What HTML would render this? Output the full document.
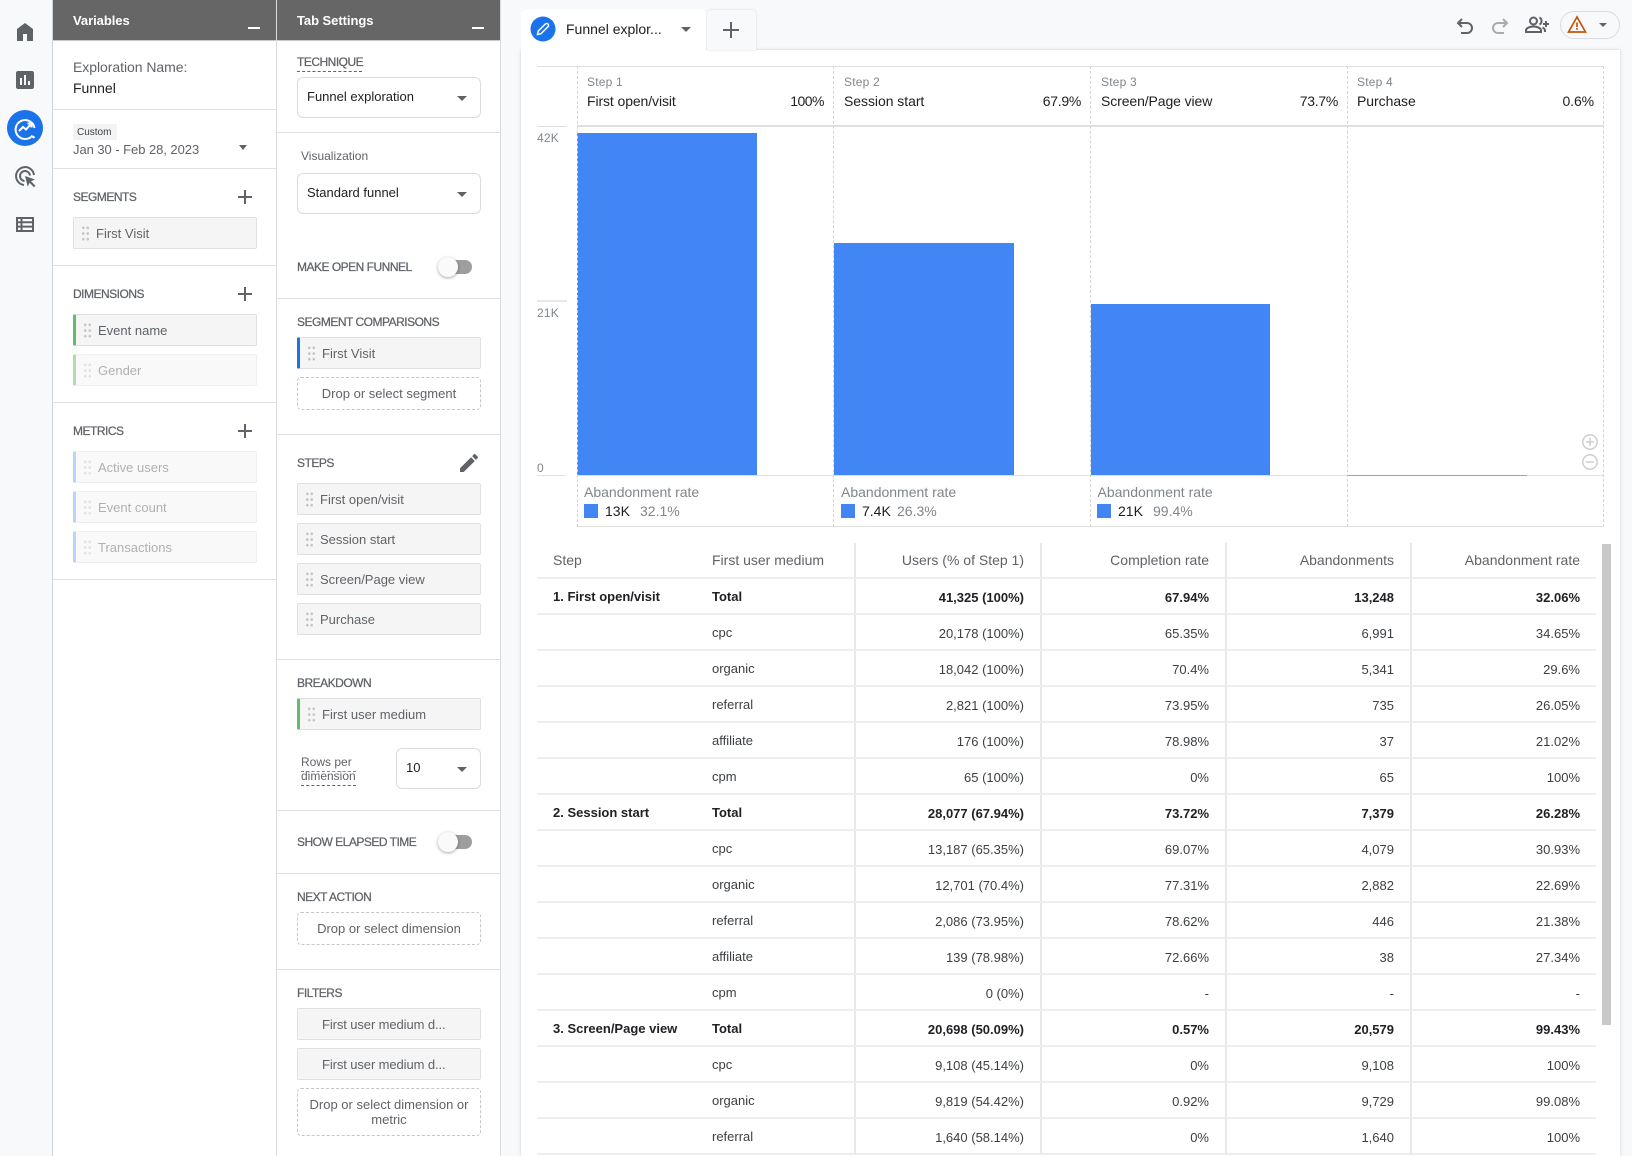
<!DOCTYPE html>
<html lang="en"><head><meta charset="utf-8"><title>Funnel exploration</title>
<style>
*{box-sizing:border-box}
html,body{margin:0;padding:0}
body{width:1632px;height:1156px;position:relative;overflow:hidden;background:#f8f9fa;font-family:"Liberation Sans",Arial,sans-serif;color:#5f6368;font-size:13px}
.a{position:absolute}
.t{position:absolute;white-space:nowrap;line-height:20px;height:20px}
.panel{position:absolute;top:0;height:1156px;background:#fff;border-right:1px solid #dadce0}
.hd{position:absolute;top:0;height:41px;background:#666;border-bottom:1px solid #c9c9c9;color:#fff;font-weight:700;font-size:13px;line-height:41px;padding-left:20px;letter-spacing:-.05px}
.hd i{position:absolute;left:195px;top:27px;width:12px;height:2px;background:#fff}
.div{position:absolute;height:1px;background:#e0e0e0}
.h{position:absolute;white-space:nowrap;line-height:20px;height:20px;font-size:12px;letter-spacing:-.5px;color:#5f6368;-webkit-text-stroke:.25px #5f6368}
.plus{position:absolute;width:14px;height:14px;background:linear-gradient(#5f6368,#5f6368) 0 6px/14px 2px no-repeat,linear-gradient(#5f6368,#5f6368) 6px 0/2px 14px no-repeat}
.chip{position:absolute;width:184px;height:32px;background:#f5f5f5;border:1px solid #e0e0e0;border-radius:2px;line-height:31px;white-space:nowrap}
.chip.bar{border-left-width:3px}
.chip.f{opacity:.5}
.chip b{font-weight:400;position:absolute;top:0;left:22px}
.chip.bar b{left:22px}
.d{position:absolute;left:7px;top:7px;width:9px;height:17px;background:radial-gradient(circle,#c2c2c2 1.1px,transparent 1.5px) 0 0/4.5px 5.7px}
.chip.bar .d{left:7px}
.sel{position:absolute;background:#fff;border:1px solid #dadce0;border-radius:6px;color:#202124;line-height:37px;padding-left:9px;height:41px}
.car{position:absolute;width:0;height:0;border-left:5px solid transparent;border-right:5px solid transparent;border-top:5px solid #5f6368}
.dash{position:absolute;left:297px;width:184px;border:1px dashed #c4c7c5;border-radius:4px;text-align:center;background:#fff}
.tg{position:absolute;width:27px;height:14px;background:#9e9e9e;border-radius:7px}
.tg i{position:absolute;left:-7px;top:-3px;width:20px;height:20px;border-radius:50%;background:#fafafa;box-shadow:0 1px 3px rgba(0,0,0,.35)}
.cl{position:absolute;top:66px;height:461px;width:0;border-left:1.5px dashed #d4d4d4}
.s{font-size:12px;color:#80868b;letter-spacing:.2px}
.n{font-size:14px;color:#202124}
.ab{font-size:14px;color:#80868b}
.sw{position:absolute;width:14px;height:14px;background:#4285f4}
table{position:absolute;left:537px;top:543px;border-collapse:separate;border-spacing:0;table-layout:fixed;width:1059px;font-size:13px;color:#3c4043}
th,td{height:36px;padding:0 16px 0 0;border-bottom:2px solid #eeeeee;white-space:nowrap;overflow:hidden;font-weight:400;box-sizing:border-box}
th{font-size:14px;color:#5f6368;text-align:right;height:36px;padding-bottom:1px}
td{text-align:right;padding-top:2px}
.l{text-align:left;padding-top:0;padding-bottom:0}
th.l{padding-bottom:1px}
.f1{padding-left:16px}
.v{border-right:2px solid #e8e8e8}
tr.b td{font-weight:700;color:#202124}
</style></head><body>

<!-- rail -->
<div class="a" style="left:52px;top:0;width:1px;height:1156px;background:#d0d3d6"></div>
<svg class="a" style="left:13px;top:20px" width="24" height="24" viewBox="0 0 24 24"><path fill="#5f6368" d="M4 21V9l8-6 8 6v12h-6v-7h-4v7z"/></svg>
<svg class="a" style="left:13px;top:68px" width="24" height="24" viewBox="0 0 24 24"><path fill="#5f6368" d="M19 3H5c-1.100 0-2 .9-2 2v14c0 1.100.9 2 2 2h14c1.100 0 2-.9 2-2V5c0-1.100-.9-2-2-2zM9 17H7v-7h2v7zm4 0h-2V7h2v10zm4 0h-2v-4h2v4z"/></svg>
<svg class="a" style="left:7px;top:110px" width="36" height="36" viewBox="0 0 36 36"><circle cx="18" cy="18" r="18" fill="#1a73e8"/><path fill="none" stroke="#fff" stroke-width="2" d="M25.500 25.500A9.500 9.500 0 1 1 27.500 18"/><path fill="none" stroke="#fff" stroke-width="2" d="M12 21l4-4 3 2.500 5-5.500M20.500 13.500h4v4"/><circle cx="26.500" cy="27" r="1.300" fill="#fff"/></svg>
<svg class="a" style="left:13px;top:164px" width="24" height="24" viewBox="0 0 24 24"><path fill="none" stroke="#5f6368" stroke-width="2" d="M11 21A9 9 0 1 1 21 11M11.500 17A5 5 0 1 1 17 11.500"/><path fill="#5f6368" d="M12 12l10 3.500-4 1.700 4.500 4.500-1.500 1.500-4.500-4.500-1.700 4z"/></svg>
<svg class="a" style="left:13px;top:212px" width="24" height="24" viewBox="0 0 24 24"><path fill="none" stroke="#5f6368" stroke-width="2" d="M4 6h16v13H4z"/><path stroke="#5f6368" stroke-width="2" d="M4 10.300h16M4 14.600h16M8.500 6v13"/></svg>

<!-- Variables panel -->
<div class="panel" style="left:53px;width:224px"></div>
<div class="hd" style="left:53px;width:223px">Variables<i></i></div>
<div class="t" style="left:73px;top:57px;font-size:14px;letter-spacing:-.05px">Exploration Name:</div>
<div class="t" style="left:73px;top:78px;font-size:14px;color:#202124">Funnel</div>
<div class="div" style="left:53px;top:109px;width:223px"></div>
<div class="a" style="left:73px;top:124px;width:44px;height:16px;background:#f1f3f4;border-radius:2px;font-size:10px;line-height:18px;padding-left:4px;color:#3c4043">Custom</div>
<div class="t" style="left:73px;top:140px;letter-spacing:-.05px">Jan 30 - Feb 28, 2023</div>
<div class="car" style="left:239px;top:145px;border-left-width:4.500px;border-right-width:4.500px"></div>
<div class="div" style="left:53px;top:168px;width:223px"></div>
<div class="h" style="left:73px;top:187px">SEGMENTS</div><div class="plus" style="left:238px;top:190px"></div>
<div class="chip" style="left:73px;top:217px"><span class="d"></span><b>First Visit</b></div>
<div class="div" style="left:53px;top:265px;width:223px"></div>
<div class="h" style="left:73px;top:284px">DIMENSIONS</div><div class="plus" style="left:238px;top:287px"></div>
<div class="chip bar" style="left:73px;top:314px;border-left-color:#66bb6a"><span class="d"></span><b>Event name</b></div>
<div class="chip bar f" style="left:73px;top:354px;border-left-color:#66bb6a"><span class="d"></span><b>Gender</b></div>
<div class="div" style="left:53px;top:402px;width:223px"></div>
<div class="h" style="left:73px;top:421px">METRICS</div><div class="plus" style="left:238px;top:424px"></div>
<div class="chip bar f" style="left:73px;top:451px;border-left-color:#7baaf7"><span class="d"></span><b>Active users</b></div>
<div class="chip bar f" style="left:73px;top:491px;border-left-color:#7baaf7"><span class="d"></span><b>Event count</b></div>
<div class="chip bar f" style="left:73px;top:531px;border-left-color:#7baaf7"><span class="d"></span><b>Transactions</b></div>
<div class="div" style="left:53px;top:579px;width:223px"></div>

<!-- Tab settings -->
<div class="panel" style="left:277px;width:224px"></div>
<div class="hd" style="left:277px;width:223px">Tab Settings<i></i></div>
<div class="h" style="left:297px;top:52px">TECHNIQUE</div>
<div class="a" style="left:297px;top:71px;width:65px;border-top:1px dashed #5f6368"></div>
<div class="sel" style="left:297px;top:77px;width:184px">Funnel exploration</div><div class="car" style="left:457px;top:96px"></div>
<div class="div" style="left:277px;top:132px;width:223px"></div>
<div class="t" style="left:301px;top:146px;font-size:12px">Visualization</div>
<div class="sel" style="left:297px;top:173px;width:184px">Standard funnel</div><div class="car" style="left:457px;top:192px"></div>
<div class="h" style="left:297px;top:257px">MAKE OPEN FUNNEL</div>
<div class="tg" style="left:445px;top:260px"><i></i></div>
<div class="div" style="left:277px;top:298px;width:223px"></div>
<div class="h" style="left:297px;top:312px">SEGMENT COMPARISONS</div>
<div class="chip bar" style="left:297px;top:337px;border-left-color:#1a73e8"><span class="d"></span><b>First Visit</b></div>
<div class="dash" style="top:377px;height:33px;line-height:31px">Drop or select segment</div>
<div class="div" style="left:277px;top:434px;width:223px"></div>
<div class="h" style="left:297px;top:453px">STEPS</div>
<svg class="a" style="left:457px;top:451px" width="24" height="24" viewBox="0 0 24 24"><path fill="#5f6368" d="M3 17.250V21h3.750L17.810 9.940l-3.750-3.750L3 17.250zM20.710 7.040a1 1 0 0 0 0-1.410l-2.340-2.340a1 1 0 0 0-1.410 0l-1.830 1.830 3.750 3.750 1.830-1.830z"/></svg>
<div class="chip" style="left:297px;top:483px"><span class="d"></span><b>First open/visit</b></div>
<div class="chip" style="left:297px;top:523px"><span class="d"></span><b>Session start</b></div>
<div class="chip" style="left:297px;top:563px"><span class="d"></span><b>Screen/Page view</b></div>
<div class="chip" style="left:297px;top:603px"><span class="d"></span><b>Purchase</b></div>
<div class="div" style="left:277px;top:659px;width:223px"></div>
<div class="h" style="left:297px;top:673px">BREAKDOWN</div>
<div class="chip bar" style="left:297px;top:698px;border-left-color:#66bb6a"><span class="d"></span><b>First user medium</b></div>
<div class="t" style="left:301px;top:752px;font-size:12px">Rows per</div>
<div class="a" style="left:301px;top:771px;width:55px;border-top:1px dashed #80868b"></div>
<div class="t" style="left:301px;top:766px;font-size:12px">dimension</div>
<div class="a" style="left:301px;top:785px;width:55px;border-top:1px dashed #5f6368"></div>
<div class="sel" style="left:396px;top:748px;width:85px">10</div><div class="car" style="left:457px;top:767px"></div>
<div class="div" style="left:277px;top:810px;width:223px"></div>
<div class="h" style="left:297px;top:832px">SHOW ELAPSED TIME</div>
<div class="tg" style="left:445px;top:835px"><i></i></div>
<div class="div" style="left:277px;top:873px;width:223px"></div>
<div class="h" style="left:297px;top:887px">NEXT ACTION</div>
<div class="dash" style="top:912px;height:33px;line-height:31px">Drop or select dimension</div>
<div class="div" style="left:277px;top:969px;width:223px"></div>
<div class="h" style="left:297px;top:983px">FILTERS</div>
<div class="chip" style="left:297px;top:1008px;padding-left:24px;letter-spacing:-.1px">First user medium d...</div>
<div class="chip" style="left:297px;top:1048px;padding-left:24px;letter-spacing:-.1px">First user medium d...</div>
<div class="dash" style="top:1088px;height:48px;line-height:15px;padding-top:8px">Drop or select dimension or metric</div>

<!-- top -->
<div class="a" style="left:521px;top:50px;width:1099px;height:1106px;background:#fff;box-shadow:0 0 3px rgba(60,64,67,.25)"></div>
<div class="a" style="left:707px;top:10px;width:49px;height:40px;background:#f8f9fa;border-radius:4px 4px 0 0;box-shadow:0 0 2px rgba(60,64,67,.18)"></div>
<div class="a" style="left:521px;top:9px;width:185px;height:43px;background:#fff;border-radius:6px 6px 0 0"></div>
<svg class="a" style="left:530px;top:16px" width="26" height="26" viewBox="0 0 26 26"><circle cx="13" cy="13" r="12.500" fill="#1a73e8"/><path fill="none" stroke="#fff" stroke-width="1.500" d="M7.500 18.500l.8-3.500 7-7a1.500 1.500 0 0 1 2.700 2.700l-7 7z"/></svg>
<div class="t" style="left:566px;top:19px;font-size:14px;color:#202124">Funnel explor...</div>
<div class="car" style="left:681px;top:27px"></div>
<div class="plus" style="left:723px;top:22px;width:16px;height:16px;background:linear-gradient(#5f6368,#5f6368) 0 7px/16px 2px no-repeat,linear-gradient(#5f6368,#5f6368) 7px 0/2px 16px no-repeat"></div>
<svg class="a" style="left:1453px;top:13px" width="24" height="24" viewBox="0 0 24 24"><path fill="none" stroke="#5f6368" stroke-width="2" d="M9 6L5 10l4 4M5 10h9a5 5 0 0 1 0 10H8"/></svg>
<svg class="a" style="left:1488px;top:13px" width="24" height="24" viewBox="0 0 24 24"><path fill="none" stroke="#a8abaf" stroke-width="2" d="M15 6l4 4-4 4M19 10h-9a5 5 0 0 0 0 10h6"/></svg>
<svg class="a" style="left:1524px;top:13px" width="26" height="24" viewBox="0 0 26 24"><circle cx="9.500" cy="8" r="3.500" fill="none" stroke="#5f6368" stroke-width="2"/><path fill="none" stroke="#5f6368" stroke-width="2" d="M2 19v-1.500c0-2.500 4-4 7.500-4s7.500 1.500 7.500 4V19zM15.500 4.500a4 4 0 0 1 0 7M18.500 14.500c1.500.7 2.500 1.700 2.500 3V19"/><path stroke="#5f6368" stroke-width="2" d="M19 11h6M22 8v6"/></svg>
<div class="a" style="left:1560px;top:11px;width:60px;height:28px;border:1px solid #dadce0;border-radius:14px"></div>
<svg class="a" style="left:1567px;top:15px" width="20" height="19" viewBox="0 0 20 19"><path fill="none" stroke="#c5530a" stroke-width="1.700" d="M10 2L1.500 17h17z"/><path stroke="#c5530a" stroke-width="1.700" d="M10 7.500v4.500M10 13v1.700"/></svg>
<div class="car" style="left:1599px;top:23px;border-left-width:4px;border-right-width:4px;border-top-width:4px"></div>

<!-- chart -->
<div class="a" style="left:537px;top:66px;width:1067px;height:1px;background:#e0e0e0"></div>
<div class="a" style="left:577px;top:125px;width:1027px;height:2px;background:#e0e0e0"></div>
<div class="a" style="left:537px;top:126px;width:30px;height:1px;background:#e0e0e0"></div>
<div class="t s" style="left:537px;top:128px">42K</div>
<div class="a" style="left:537px;top:300px;width:30px;height:2px;background:#e8e8e8"></div>
<div class="t s" style="left:537px;top:303px">21K</div>
<div class="t s" style="left:537px;top:458px">0</div>
<div class="a" style="left:537px;top:475px;width:28px;height:1px;background:#e0e0e0"></div>
<div class="a" style="left:577px;top:475px;width:1027px;height:1px;background:#e0e0e0"></div>
<div class="a" style="left:577px;top:526px;width:1027px;height:1px;background:#e0e0e0"></div>
<div class="a" style="left:577px;top:133px;width:180px;height:342px;background:#4285f4"></div>
<div class="a" style="left:834px;top:243px;width:180px;height:232px;background:#4285f4"></div>
<div class="a" style="left:1091px;top:304px;width:179px;height:171px;background:#4285f4"></div>
<div class="a" style="left:1347px;top:475px;width:180px;height:1px;background:#7da3e8"></div>
<div class="cl" style="left:576.500px"></div><div class="cl" style="left:833px"></div><div class="cl" style="left:1090px"></div><div class="cl" style="left:1347px"></div><div class="cl" style="left:1603px"></div>

<div class="t s" style="left:587px;top:72px">Step 1</div><div class="t n" style="left:587px;top:91px;letter-spacing:-.1px">First open/visit</div><div class="t n" style="right:808px;top:91px;letter-spacing:-.5px">100%</div>
<div class="t s" style="left:844px;top:72px">Step 2</div><div class="t n" style="left:844px;top:91px;letter-spacing:-.05px">Session start</div><div class="t n" style="right:551px;top:91px;letter-spacing:-.3px">67.9%</div>
<div class="t s" style="left:1101px;top:72px">Step 3</div><div class="t n" style="left:1101px;top:91px;letter-spacing:-.1px">Screen/Page view</div><div class="t n" style="right:294px;top:91px;letter-spacing:-.3px">73.7%</div>
<div class="t s" style="left:1357px;top:72px">Step 4</div><div class="t n" style="left:1357px;top:91px;letter-spacing:-.05px">Purchase</div><div class="t n" style="right:38px;top:91px;letter-spacing:-.1px">0.6%</div>

<div class="t ab" style="left:584px;top:482px">Abandonment rate</div><div class="sw" style="left:584px;top:504px"></div><div class="t n" style="left:605px;top:501px">13K</div><div class="t ab" style="left:640px;top:501px">32.1%</div>
<div class="t ab" style="left:841px;top:482px">Abandonment rate</div><div class="sw" style="left:841px;top:504px"></div><div class="t n" style="left:862px;top:501px">7.4K</div><div class="t ab" style="left:897px;top:501px">26.3%</div>
<div class="t ab" style="left:1097.500px;top:482px">Abandonment rate</div><div class="sw" style="left:1097px;top:504px"></div><div class="t n" style="left:1118px;top:501px">21K</div><div class="t ab" style="left:1153px;top:501px">99.4%</div>

<svg class="a" style="left:1581px;top:433px" width="18" height="38" viewBox="0 0 18 38"><g fill="none" stroke="#cfcfcf" stroke-width="1.500"><circle cx="9" cy="9" r="7.200"/><circle cx="9" cy="29" r="7.200"/><path d="M5 9h8M9 5v8M5 29h8"/></g></svg>

<!-- table -->
<table>
<colgroup><col style="width:175px"><col style="width:144px"><col style="width:186px"><col style="width:185px"><col style="width:185px"><col style="width:184px"></colgroup>
<tr><th class="l f1">Step</th><th class="l v">First user medium</th><th class="v">Users (% of Step 1)</th><th class="v">Completion rate</th><th class="v">Abandonments</th><th>Abandonment rate</th></tr>
<tr class="b"><td class="l f1">1. First open/visit</td><td class="l v">Total</td><td class="v">41,325 (100%)</td><td class="v">67.94%</td><td class="v">13,248</td><td>32.06%</td></tr>
<tr><td class="l f1"></td><td class="l v">cpc</td><td class="v">20,178 (100%)</td><td class="v">65.35%</td><td class="v">6,991</td><td>34.65%</td></tr>
<tr><td class="l f1"></td><td class="l v">organic</td><td class="v">18,042 (100%)</td><td class="v">70.4%</td><td class="v">5,341</td><td>29.6%</td></tr>
<tr><td class="l f1"></td><td class="l v">referral</td><td class="v">2,821 (100%)</td><td class="v">73.95%</td><td class="v">735</td><td>26.05%</td></tr>
<tr><td class="l f1"></td><td class="l v">affiliate</td><td class="v">176 (100%)</td><td class="v">78.98%</td><td class="v">37</td><td>21.02%</td></tr>
<tr><td class="l f1"></td><td class="l v">cpm</td><td class="v">65 (100%)</td><td class="v">0%</td><td class="v">65</td><td>100%</td></tr>
<tr class="b"><td class="l f1">2. Session start</td><td class="l v">Total</td><td class="v">28,077 (67.94%)</td><td class="v">73.72%</td><td class="v">7,379</td><td>26.28%</td></tr>
<tr><td class="l f1"></td><td class="l v">cpc</td><td class="v">13,187 (65.35%)</td><td class="v">69.07%</td><td class="v">4,079</td><td>30.93%</td></tr>
<tr><td class="l f1"></td><td class="l v">organic</td><td class="v">12,701 (70.4%)</td><td class="v">77.31%</td><td class="v">2,882</td><td>22.69%</td></tr>
<tr><td class="l f1"></td><td class="l v">referral</td><td class="v">2,086 (73.95%)</td><td class="v">78.62%</td><td class="v">446</td><td>21.38%</td></tr>
<tr><td class="l f1"></td><td class="l v">affiliate</td><td class="v">139 (78.98%)</td><td class="v">72.66%</td><td class="v">38</td><td>27.34%</td></tr>
<tr><td class="l f1"></td><td class="l v">cpm</td><td class="v">0 (0%)</td><td class="v">-</td><td class="v">-</td><td>-</td></tr>
<tr class="b"><td class="l f1">3. Screen/Page view</td><td class="l v">Total</td><td class="v">20,698 (50.09%)</td><td class="v">0.57%</td><td class="v">20,579</td><td>99.43%</td></tr>
<tr><td class="l f1"></td><td class="l v">cpc</td><td class="v">9,108 (45.14%)</td><td class="v">0%</td><td class="v">9,108</td><td>100%</td></tr>
<tr><td class="l f1"></td><td class="l v">organic</td><td class="v">9,819 (54.42%)</td><td class="v">0.92%</td><td class="v">9,729</td><td>99.08%</td></tr>
<tr><td class="l f1"></td><td class="l v">referral</td><td class="v">1,640 (58.14%)</td><td class="v">0%</td><td class="v">1,640</td><td>100%</td></tr>
</table>
<div class="a" style="left:1602px;top:544px;width:9px;height:481px;background:#c8c8c8"></div>
</body></html>
